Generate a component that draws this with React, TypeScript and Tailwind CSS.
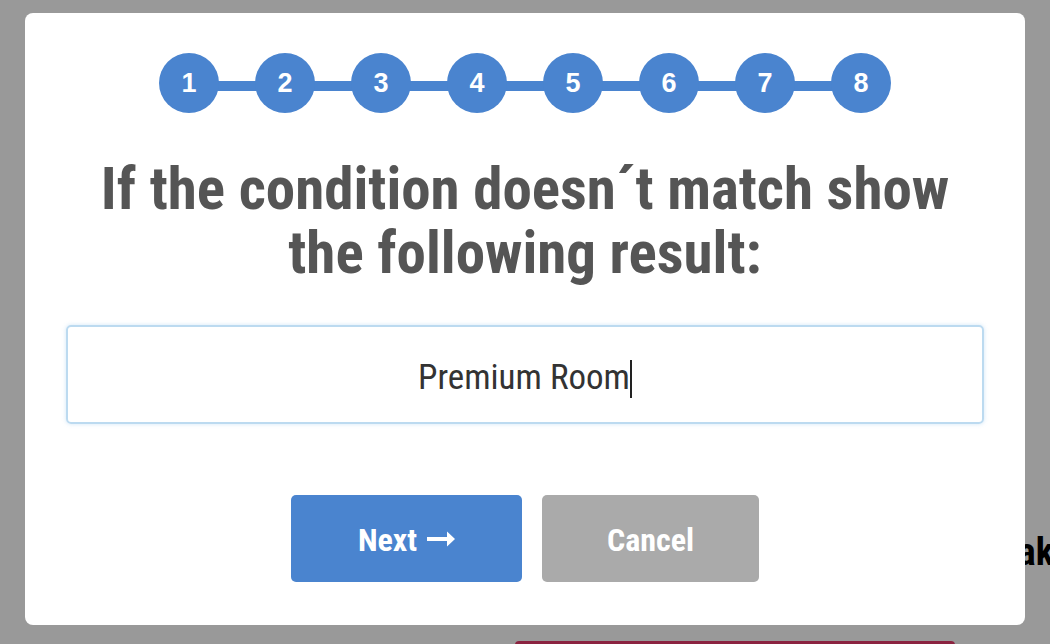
export default function App() {
  const steps = [1, 2, 3, 4, 5, 6, 7, 8];
  return (
    <div className="relative w-[1050px] h-[644px] overflow-hidden bg-[#999999]">
      {/* page content peeking out behind the modal */}
      <div className="absolute left-[989px] top-[528px] text-[38px] leading-[48px] font-bold text-black font-['Roboto_Condensed',Roboto,sans-serif]">Make</div>
      <div className="absolute left-[515px] top-[641px] w-[440px] h-[20px] rounded-t-[4px] bg-[#8b2340]" />

      <div className="absolute left-[25px] top-[13px] w-[1000px] h-[612px] rounded-[8px] bg-white flex flex-col items-center">
        {/* Steps */}
        <div className="mt-[40px] relative flex items-center gap-[36px]">
          <div className="absolute left-[30px] right-[30px] top-[28px] h-[10px] bg-[#4a84cf]" />
          {steps.map((n) => (
            <div key={n} className="relative w-[60px] h-[60px] rounded-full bg-[#4a84cf] flex items-center justify-center text-white text-[27px] font-bold font-['Liberation_Sans',Arial,sans-serif]">
              {n}
            </div>
          ))}
        </div>

        <h1 className="mt-[44px] text-center text-[59px] leading-[64px] font-bold text-[#555555] font-['Roboto_Condensed',Roboto,sans-serif]">
          If the condition doesn´t match show
          <br />
          the following result:
        </h1>

        {/* Input */}
        <div className="mt-[40px] w-[918px] h-[99px] pt-[8px] rounded-[5px] border-2 border-[#bcdaf0] shadow-[0_0_4px_rgba(120,180,230,0.35)] flex items-center justify-center">
          <span className="text-[35px] text-[#333333] font-['Roboto_Condensed',Roboto,sans-serif]">Premium Room</span>
          <span className="w-[2px] h-[38px] bg-[#222]" />
        </div>

        {/* Buttons */}
        <div className="mt-[71px] flex gap-[20px]">
          <button className="w-[231px] h-[87px] pt-[2px] rounded-[5px] bg-[#4a84cf] text-white text-[32px] font-bold font-['Roboto_Condensed',Roboto,sans-serif] flex items-center justify-center gap-[10px]">
            Next
            <svg width="28" height="16" viewBox="0 0 28 16" className="mt-[-2px]">
              <rect x="0" y="6" width="21" height="4" fill="white" />
              <polygon points="20,0.5 28,8 20,15.5" fill="white" />
            </svg>
          </button>
          <button className="w-[217px] h-[87px] pt-[2px] rounded-[5px] bg-[#aaaaaa] text-white text-[32px] font-bold font-['Roboto_Condensed',Roboto,sans-serif]">
            Cancel
          </button>
        </div>
      </div>
    </div>
  );
}
